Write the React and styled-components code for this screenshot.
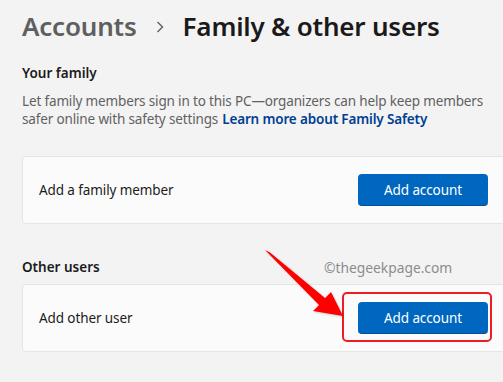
import React from 'react';
import styled, { createGlobalStyle } from 'styled-components';

const GlobalStyle = createGlobalStyle`
  html, body {
    margin: 0;
    padding: 0;
    background: #f3f3f3;
    overflow: hidden;
  }
  body {
    font-family: 'Noto Sans', 'Open Sans', sans-serif;
    color: #1b1b1b;
  }
`;

const Page = styled.div`
  position: relative;
  width: 503px;
  height: 382px;
  box-sizing: border-box;
  padding: 6px 0 0 22px;
`;

const Breadcrumb = styled.h1`
  display: flex;
  align-items: center;
  margin: 0;
  height: 40px;
  font-weight: 600;
  font-size: 26px;
  letter-spacing: -0.2px;
`;

const Crumb = styled.span`
  color: ${(props) => (props.current ? '#1a1a1a' : '#5f5f5f')};
`;

const Chevron = styled.svg`
  width: 8px;
  height: 12px;
  margin: 2px 19px 0 19px;
`;

const Section = styled.section`
  margin-top: ${(props) => props.top}px;
`;

const SectionTitle = styled.h2`
  margin: 0;
  font-size: 13.5px;
  font-weight: 600;
  line-height: 18px;
  color: #1b1b1b;
`;

const Description = styled.p`
  margin: 10px 0 0;
  font-size: 13.5px;
  line-height: 18px;
  color: #616161;
  letter-spacing: -0.15px;
`;

const Link = styled.a`
  color: #003e92;
  font-weight: 600;
  text-decoration: none;
  margin-left: 4px;
`;

const Card = styled.div`
  display: flex;
  align-items: center;
  justify-content: space-between;
  height: 66px;
  margin-top: ${(props) => props.top}px;
  margin-right: -6px;
  padding: 0 20px 0 16px;
  background: #fbfbfb;
  border: 1px solid #e5e5e5;
  border-radius: 4px;
`;

const CardLabel = styled.span`
  font-size: 13.5px;
  color: #1b1b1b;
  letter-spacing: -0.1px;
`;

const Button = styled.button`
  width: 130px;
  height: 32px;
  border: none;
  border-bottom: 1px solid #00509a;
  border-radius: 4px;
  background: #0067c0;
  color: #ffffff;
  font-family: inherit;
  font-size: 13.5px;
  letter-spacing: -0.1px;
  cursor: pointer;
`;

const Highlight = styled.div`
  position: relative;
  display: flex;

  &::after {
    content: '';
    position: absolute;
    top: -10px;
    bottom: -8px;
    left: -16px;
    right: -4px;
    border: 2px solid #ee1c24;
    border-radius: 5px;
    pointer-events: none;
  }
`;

const Watermark = styled.span`
  position: absolute;
  left: 324px;
  top: 258px;
  font-size: 13.8px;
  color: #8c8c8c;
`;

const Arrow = styled.svg`
  position: absolute;
  left: 0;
  top: 0;
  width: 503px;
  height: 382px;
  pointer-events: none;
  filter: drop-shadow(1px 1px 1px rgba(0, 0, 0, 0.2));
`;

const App = () => {
  return (
    <>
      <GlobalStyle />
      <Page>
        <Breadcrumb>
          <Crumb>Accounts</Crumb>
          <Chevron viewBox="0 0 8 12">
            <path d="M1.5 1 L6.5 6 L1.5 11" fill="none" stroke="#5f5f5f" strokeWidth="1.4" />
          </Chevron>
          <Crumb current>Family &amp; other users</Crumb>
        </Breadcrumb>

        <Section top={18}>
          <SectionTitle>Your family</SectionTitle>
          <Description>
            <span>Let family members sign in to this PC—organizers can help keep members</span>
            <br />
            <span>safer online with safety settings</span>
            <Link href="#">Learn more about Family Safety</Link>
          </Description>
        </Section>

        <Card top={28}>
          <CardLabel>Add a family member</CardLabel>
          <Button>Add account</Button>
        </Card>

        <Section top={34}>
          <SectionTitle>Other users</SectionTitle>
        </Section>

        <Card top={8}>
          <CardLabel>Add other user</CardLabel>
          <Highlight>
            <Button>Add account</Button>
          </Highlight>
        </Card>

        <Watermark>©thegeekpage.com</Watermark>
        <Arrow viewBox="0 0 503 382">
          <path d="M265 250 L270 252.5 L325 298 L331 292 L343 316 L313 311 L319 305 Z" fill="#ff0000" />
        </Arrow>
      </Page>
    </>
  );
};

export default App;
